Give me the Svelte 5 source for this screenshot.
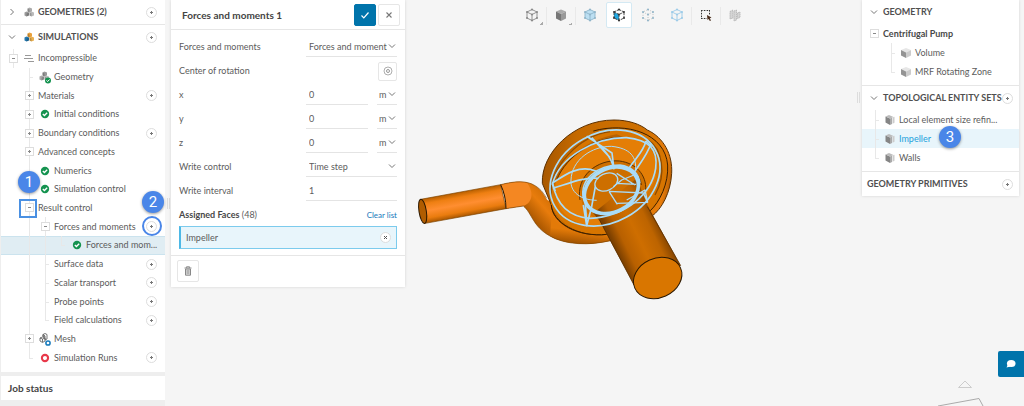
<script lang="ts">
  type Row = {
    cells: string[];
    label: string;
    add?: boolean;
    selected?: boolean;
    square?: boolean;
    badge?: number;
  };

  // one entry per 16px column: guides first, then the row icon
  const rows: Row[] = [
    { cells: ['minus', 'flow'], label: 'Incompressible' },
    { cells: ['', 'tee', 'geometry'], label: 'Geometry' },
    { cells: ['', 'plus'], label: 'Materials', add: true },
    { cells: ['', 'plus', 'check'], label: 'Initial conditions' },
    { cells: ['', 'plus'], label: 'Boundary conditions', add: true },
    { cells: ['', 'plus'], label: 'Advanced concepts' },
    { cells: ['', 'line', 'check'], label: 'Numerics' },
    { cells: ['', 'line', 'check'], label: 'Simulation control' },
    { cells: ['', 'minus'], label: 'Result control', square: true },
    { cells: ['', 'line', 'minus'], label: 'Forces and moments', add: true, badge: 2 },
    { cells: ['', 'line', 'line', 'elbow', 'check'], label: 'Forces and mom...', selected: true },
    { cells: ['', 'line', 'tee'], label: 'Surface data', add: true },
    { cells: ['', 'line', 'tee'], label: 'Scalar transport', add: true },
    { cells: ['', 'line', 'tee'], label: 'Probe points', add: true },
    { cells: ['', 'line', 'elbow'], label: 'Field calculations', add: true },
    { cells: ['', 'plus', 'mesh'], label: 'Mesh' },
    { cells: ['', 'elbow', 'runs'], label: 'Simulation Runs', add: true },
  ];

  const sets = ['Local element size refin...', 'Impeller', 'Walls'];
  const tools = ['wire', 'solid', 'volume', 'face', 'edge', 'vertex', 'box', 'hidden'];

  let axes = $state([
    { name: 'x', value: '0' },
    { name: 'y', value: '0' },
    { name: 'z', value: '0' },
  ]);
  let interval = $state('1');
  let activeTool = $state('face');
</script>

{#snippet chevron(open: boolean)}
  <svg class="chevron" aria-hidden="true" width="8" height="8" viewBox="0 0 8 8">
    <path d={open ? 'M1 2.5 4 5.5 7 2.5' : 'M2.5 1 5.5 4 2.5 7'} fill="none" stroke="#777" />
  </svg>
{/snippet}

{#snippet addButton(label: string)}
  <button class="add" aria-label="Add {label}">
    <svg aria-hidden="true" width="5" height="5" viewBox="0 0 5 5">
      <path d="M2.5 1v3M1 2.5h3" stroke="#777" />
    </svg>
  </button>
{/snippet}

{#snippet cubes(a: string, b: string, c: string)}
  <path d="M5.5 0.5 8 1.5V4.5L5.5 5.5 3.5 4.5V1.5z" fill={a} />
  <path d="M0.5 5.5 2.5 4.5 5 5.5V8.5L2.5 9.5 0.5 8.5z" fill={b} />
  <path d="M5.5 5.5 7.5 4.5 10 5.5V8.5L7.5 9.5 5.5 8.5z" fill={c} />
  <path d="M3.5 1.5 5.5 2.5V5.5L3.5 4.5zM2.5 6.5 5 5.5V8.5L2.5 9.5zM5.5 5.5 7.5 6.5V9.5L5.5 8.5z" fill="#0003" />
{/snippet}

{#snippet body()}
  <svg class="body-icon" aria-hidden="true" width="10" height="10" viewBox="0 0 10 10">
    <path d="M5 0 10 2 5 4.5 0 2z" fill="#e6e6e6" />
    <path d="M0 2 5 4.5V10L0 7.5z" fill="#949494" />
    <path d="M5 4.5 10 2V7.5L5 10z" fill="#ccc" />
  </svg>
{/snippet}

{#snippet faces()}
  <svg class="body-icon" aria-hidden="true" width="10" height="10" viewBox="0 0 10 10">
    <path d="M0.5 1.5 5 3.5V10L0.5 7.5z" fill="#858585" />
    <path d="M0.5 1.5 4 0 8.5 2 5 3.5z" fill="#bbb" />
    <path d="M5 3.5 7 2.7V9L5 10z" fill="#aaa" />
    <path d="M7.5 2.5 9.5 1.7V7.8L7.5 8.7z" fill="#ccc" />
  </svg>
{/snippet}

{#snippet cell(kind: string)}
  <span class="cell {kind}">
    {#if kind === 'plus' || kind === 'minus'}
      <button class="toggle" aria-label={kind === 'plus' ? 'Expand' : 'Collapse'}>
        <svg aria-hidden="true" width="5" height="5" viewBox="0 0 5 5">
          <path d={kind === 'plus' ? 'M2.5 1v3M1 2.5h3' : 'M1 2.5h3'} stroke="#888" />
        </svg>
      </button>
    {:else if kind === 'flow'}
      <svg aria-hidden="true" width="12" height="10" viewBox="0 0 12 10">
        <path d="M2 2.5h6M1 5.5h9M5 8.5h6" stroke="#999" />
      </svg>
    {:else if kind === 'geometry'}
      <svg aria-hidden="true" width="14" height="14" viewBox="0 0 14 14">
        <g transform="translate(1 1)">{@render cubes('#999', '#aaa', '#bbb')}</g>
        <circle cx="10" cy="10.5" r="3" fill="#159350" />
        <path d="M8.5 10.5 9.7 11.5 11.5 9.5" fill="none" stroke="#fff" />
      </svg>
    {:else if kind === 'check'}
      <svg aria-hidden="true" width="10" height="10" viewBox="0 0 10 10">
        <circle cx="5" cy="5" r="4.2" fill="#159350" />
        <path d="M2.8 5 4.4 6.5 7.2 3.7" fill="none" stroke="#fff" stroke-width="1.3" />
      </svg>
    {:else if kind === 'mesh'}
      <svg aria-hidden="true" width="14" height="14" viewBox="0 0 14 14">
        <path d="M5 2.5 7 1.5 9 2.5V7L7 8V4L5 4.5zM2 6 4.5 5 7 6V9L4.5 10.5 2 9zM2 6 4.5 7 7 6M4.5 7v3M5 4.5V2.5L7 4" fill="none" stroke="#555" stroke-width="0.8" />
        <circle cx="10" cy="11" r="2.1" fill="#fff" stroke="#1579bb" stroke-width="1.5" />
      </svg>
    {:else if kind === 'runs'}
      <svg aria-hidden="true" width="10" height="10" viewBox="0 0 10 10">
        <circle cx="5" cy="5" r="3.1" fill="#fff" stroke="#e8394a" stroke-width="2.1" />
      </svg>
    {/if}
  </span>
{/snippet}

{#snippet toolIcon(kind: string)}
  <svg aria-hidden="true" width="14" height="14" viewBox="0 0 14 14">
    {#if kind === 'box'}
      <path d="M2 2.5h9M2 10.5h6M2.5 2v9M10.5 2v5" fill="none" stroke="#333" stroke-dasharray="1.6 1.2" />
      <path d="M8 7 12.5 9.5 10.8 10.2 12 12.5 10.8 13 9.8 11 8.5 12z" fill="#4a2d1c" />
    {:else if kind === 'hidden'}
      <path d="M2 3.5 5 2V10L2 11zM6 3 8.5 2V12L6 13zM9.5 5 12 4V9.5L9.5 10.5z" fill="#d5d5d5" stroke="#b0b0b0" stroke-width="0.8" stroke-dasharray="1.5 0.6" />
    {:else if kind === 'solid'}
      <path d="M7 1.5 12 3.5 7 6 2 3.5z" fill="#aaa" />
      <path d="M2 3.5 7 6V13L2 10.5z" fill="#777" />
      <path d="M7 6 12 3.5V10.5L7 13z" fill="#999" />
    {:else}
      {@const color = kind === 'face' ? '#333' : kind === 'volume' || kind === 'vertex' ? '#9bcbe8' : kind === 'edge' ? '#bbb' : '#888'}
      {#if kind === 'volume'}
        <path d="M7 1.5 12 4V10L7 12.5 2 10V4z" fill="#bcdff2" />
      {:else if kind === 'face'}
        <path d="M2 4 7 6.5V12.5L2 10z" fill="#22a7e0" />
      {/if}
      <path
        d="M7 1.5 12 4V10L7 12.5 2 10V4zM2 4 7 6.5 12 4M7 6.5V12.5"
        fill="none"
        stroke={kind === 'volume' ? '#8db4ca' : color}
        stroke-width="0.9"
        stroke-dasharray={kind === 'edge' ? '1 1.5' : kind === 'face' ? '2.4 0.8' : 'none'}
      />
      {#each [[7, 1.5], [12, 4], [12, 10], [7, 12.5], [2, 10], [2, 4], [7, 6.5]] as [x, y]}
        <circle cx={x} cy={y} r="1" fill={kind === 'edge' || kind === 'volume' ? '#8fb4c8' : color} />
      {/each}
    {/if}
  </svg>
{/snippet}

<div class="workbench">
  <aside class="sidebar">
    <nav class="tree-card" aria-label="Project">
      <div class="section">
        {@render chevron(false)}
        <svg aria-hidden="true" width="10" height="10" viewBox="0 0 10 10">
          {@render cubes('#aaa', '#999', '#bbb')}
        </svg>
        <h2>GEOMETRIES (2)</h2>
        {@render addButton('geometry')}
      </div>
      <div class="section open">
        {@render chevron(true)}
        <svg aria-hidden="true" width="10" height="10" viewBox="0 0 10 10">
          {@render cubes('#e9a13b', '#2377ae', '#e9b152')}
        </svg>
        <h2>SIMULATIONS</h2>
        {@render addButton('simulation')}
      </div>
      <ul class="tree">
        {#each rows as row}
          <li class:selected={row.selected}>
            {#each row.cells as kind}
              {@render cell(kind)}
            {/each}
            <span class="label">{row.label}</span>
            {#if row.add}
              {@render addButton(row.label)}
            {/if}
            {#if row.square}
              <span class="mark-square"></span>
              <span class="callout one">1</span>
            {/if}
            {#if row.badge}
              <span class="mark-ring"></span>
              <span class="callout two">{row.badge}</span>
            {/if}
          </li>
        {/each}
      </ul>
    </nav>
    <h2 class="job-status">Job status</h2>
  </aside>

  <div class="handle"></div>

  <form class="settings" onsubmit={(e) => e.preventDefault()}>
    <header>
      <h1>Forces and moments 1</h1>
      <button class="square-button primary" aria-label="Save">
        <svg aria-hidden="true" width="10" height="10" viewBox="0 0 10 10">
          <path d="M1.5 5.5 3.8 7.8 8.5 2.5" fill="none" stroke="#fff" stroke-width="1.2" />
        </svg>
      </button>
      <button class="square-button" type="button" aria-label="Close">
        <svg aria-hidden="true" width="8" height="8" viewBox="0 0 8 8">
          <path d="M1.5 1.5 6.5 6.5M6.5 1.5 1.5 6.5" stroke="#777" stroke-width="1.1" />
        </svg>
      </button>
    </header>

    <div class="fields">
      <div class="field">
        <label for="kind">Forces and moments</label>
        <span class="select">
          <select id="kind"><option>Forces and moments</option></select>
          {@render chevron(true)}
        </span>
      </div>
      <div class="field">
        <span class="name">Center of rotation</span>
        <button class="pick" type="button" aria-label="Pick center of rotation">
          <svg aria-hidden="true" width="10" height="10" viewBox="0 0 10 10">
            <circle cx="5" cy="5" r="4" fill="none" stroke="#999" stroke-width="0.8" />
            <circle cx="5" cy="5" r="1.5" fill="none" stroke="#999" />
          </svg>
        </button>
      </div>
      {#each axes as axis}
        <div class="field">
          <label for="axis-{axis.name}">{axis.name}</label>
          <span class="pair">
            <input id="axis-{axis.name}" bind:value={axis.value} />
            <span class="select unit">
              <select aria-label="Unit of {axis.name}"><option>m</option></select>
              {@render chevron(true)}
            </span>
          </span>
        </div>
      {/each}
      <div class="field">
        <label for="write-control">Write control</label>
        <span class="select">
          <select id="write-control"><option>Time step</option></select>
          {@render chevron(true)}
        </span>
      </div>
      <div class="field">
        <label for="interval">Write interval</label>
        <input id="interval" bind:value={interval} />
      </div>
      <div class="assigned-head">
        <span><strong>Assigned Faces</strong> (48)</span>
        <a href="#clear">Clear list</a>
      </div>
      <div class="assigned">
        <span>Impeller</span>
        <button class="add" type="button" aria-label="Remove Impeller">
          <svg aria-hidden="true" width="5" height="5" viewBox="0 0 5 5">
            <path d="M1 1 4 4M4 1 1 4" stroke="#555" />
          </svg>
        </button>
      </div>
    </div>

    <footer>
      <button class="square-button" type="button" aria-label="Delete">
        <svg aria-hidden="true" width="10" height="10" viewBox="0 0 10 10">
          <path d="M1.5 2h7M3.5 1.8V0.8h3v1" fill="none" stroke="#888" />
          <path d="M2.5 3h5v6.2h-5z" fill="#ddd" stroke="#888" />
          <path d="M4.2 4v4M5.8 4v4" stroke="#888" stroke-width="0.7" />
        </svg>
      </button>
    </footer>
  </form>

  <main class="stage">
    <div class="toolbar" role="toolbar" aria-label="View">
      {#each tools as tool}
        <button
          class="tool {tool}"
          class:active={activeTool === tool}
          aria-label="{tool} mode"
          onclick={() => (activeTool = tool)}
        >
          {@render toolIcon(tool)}
        </button>
      {/each}
    </div>
    <svg class="model" viewBox="-15 -219 1371 1122" role="img" aria-label="Centrifugal pump model">
      <defs>
        <linearGradient id="inlet" gradientUnits="userSpaceOnUse" x1="150" y1="262" x2="163" y2="334">
          <stop offset="0" stop-color="#b96000" />
          <stop offset="0.2" stop-color="#ee7f12" />
          <stop offset="0.5" stop-color="#ff8e31" />
          <stop offset="0.8" stop-color="#ea7c0e" />
          <stop offset="1" stop-color="#a85600" />
        </linearGradient>
        <linearGradient id="bend" gradientUnits="userSpaceOnUse" x1="440" y1="270" x2="360" y2="340">
          <stop offset="0" stop-color="#c56700" />
          <stop offset="0.5" stop-color="#e87c0c" />
          <stop offset="1" stop-color="#a65500" />
        </linearGradient>
        <linearGradient id="volute" gradientUnits="userSpaceOnUse" x1="520" y1="380" x2="515" y2="420">
          <stop offset="0" stop-color="#e37a08" />
          <stop offset="1" stop-color="#9c5000" />
        </linearGradient>
        <linearGradient id="casing" gradientUnits="userSpaceOnUse" x1="410" y1="170" x2="790" y2="230">
          <stop offset="0" stop-color="#a95900" />
          <stop offset="0.2" stop-color="#c56a00" />
          <stop offset="0.7" stop-color="#cf7000" />
          <stop offset="0.93" stop-color="#e87d0c" />
          <stop offset="1" stop-color="#a45400" />
        </linearGradient>
        <linearGradient id="outlet" gradientUnits="userSpaceOnUse" x1="620" y1="435" x2="755" y2="370">
          <stop offset="0" stop-color="#7c4000" />
          <stop offset="0.2" stop-color="#b86000" />
          <stop offset="0.5" stop-color="#ce6e00" />
          <stop offset="0.8" stop-color="#bd6400" />
          <stop offset="1" stop-color="#874600" />
        </linearGradient>
      </defs>

      <path d="M32 283 272 239 288 311 46 355z" fill="url(#inlet)" stroke="#7c4200" stroke-width="2" />
      <ellipse cx="38" cy="319" rx="11" ry="37" transform="rotate(-9 38 319)" fill="#b05c00" stroke="#2b1800" stroke-width="3" />
      <path d="M272 239C315 228 350 226 375 242 395 254 402 270 412 285L620 380 600 407C540 422 465 420 420 393 368 365 366 324 340 303L288 311C288 285 282 260 272 239z" fill="url(#bend)" />
      <path d="M272 239C300 232 330 228 350 232 375 265 365 295 340 303L288 311C288 285 282 260 272 239z" fill="#f48722" />
      <path d="M425 330C450 375 520 400 600 382L605 407C540 422 465 420 420 393z" fill="url(#volute)" />
      <path d="M272 239C315 228 350 226 375 242 395 254 402 268 410 280M288 311 340 303C366 324 368 365 420 393 465 420 540 422 600 407" fill="none" stroke="#7c4200" stroke-width="2" />
      <path d="M272 239C282 260 288 285 288 311" fill="none" stroke="#2b1800" stroke-width="3" />

      <path d="M397 235C393 145 490 45 612 45 655 45 690 57 712 75 762 98 788 150 785 205 782 262 756 312 725 334L595 388C500 398 428 355 424 300z" fill="url(#casing)" stroke="#5c3000" stroke-width="3" />
      <path d="M424 300C405 200 490 85 630 72 715 72 770 120 772 190 773 245 750 290 722 318L595 388C505 397 440 350 424 300z" fill="#d77500" />
      <path d="M424 300C426 352 505 398 590 388M550 78C650 50 765 85 773 180 776 235 750 290 720 318" fill="none" stroke="#3a1f00" stroke-width="3" />
      <path d="M424 280C415 185 510 92 600 80" fill="none" stroke="#8f4c00" stroke-width="4" />
      <path d="M438 232C470 145 560 98 650 98 720 105 745 150 738 215 700 310 620 350 555 362 480 362 425 310 438 232z" fill="#e47e06" />
      <path d="M424 262C435 180 520 105 620 88L645 98C560 98 470 150 436 232z" fill="#b96200" />
      <path d="M440 225C470 150 560 90 645 98" fill="none" stroke="#5b3100" stroke-width="3" />
      <path d="M715 105C755 130 772 205 735 270" fill="none" stroke="#8f4c00" stroke-width="4" />

      <path d="M513 270C500 210 565 160 628 168 678 174 710 210 707 255L690 300 567 345C530 330 515 310 513 270z" fill="#cd6f00" />
      <path d="M510 285C497 215 560 162 628 168 678 174 710 210 707 255M524 290C515 230 570 183 625 182 665 184 690 205 694 240" fill="none" stroke="#5b3100" stroke-width="3" />
      <path d="M567 345 550 325 680 220 712 300 812 482 672 540z" fill="url(#outlet)" />
      <path d="M569 345 672 540M712 305 812 482" stroke="#5c3000" stroke-width="2.5" />
      <ellipse cx="743" cy="519" rx="75" ry="59" transform="rotate(-24 743 519)" fill="#d97600" stroke="#2b1800" stroke-width="3" />

      <g class="wires">
        <ellipse cx="585" cy="219" rx="173" ry="134" transform="rotate(-29 585 219)" stroke-width="5" />
        <path d="M428 235C450 155 555 97 650 98 715 105 745 130 737 190 725 265 650 335 540 340 475 335 440 300 428 235z" stroke-width="5" />
        <path d="M483 225C485 165 545 123 605 124 660 130 682 155 676 200M483 225C480 260 510 285 560 286" />
        <path d="M530 94C565 112 604 150 612 193M530 94 606 144 612 193M545 98 600 158" stroke-width="5" />
        <path d="M708 108C700 140 678 158 658 188M723 115C712 150 690 175 675 198M708 108 725 125" stroke-width="5" />
        <path d="M426 235C470 205 510 180 555 197L568 207M428 250C480 234 525 215 565 220M426 235 436 258" stroke-width="5" />
        <path d="M525 270 530 362 545 305 556 245M530 362 520 300" stroke-width="5" />
        <path d="M597 259 700 264 713 292 622 295M597 259 622 298M650 285 705 255 713 292" stroke-width="4" />
        <path d="M620 205 675 240M620 235 678 238M610 245 635 225 672 210" stroke-width="4" />
        <ellipse cx="589" cy="231" rx="36" ry="25" transform="rotate(-25 589 231)" stroke-width="4" />
        <ellipse cx="604" cy="256" rx="85" ry="65" transform="rotate(-28 604 256)" stroke-width="11" />
        <path d="M520 280C508 225 560 180 630 180 665 185 688 205 690 235" stroke-width="4" />
      </g>
    </svg>
  </main>

  <div class="right">
    <aside class="scene">
      <section>
        <h2>{@render chevron(true)}GEOMETRY</h2>
        <p class="part">{@render cell('minus')}<strong>Centrifugal Pump</strong></p>
        <ul class="bodies">
          <li>{@render cell('tee')}{@render body()}<span class="label">Volume</span></li>
          <li>{@render cell('elbow')}{@render body()}<span class="label">MRF Rotating Zone</span></li>
        </ul>
      </section>
      <section>
        <h2>{@render chevron(true)}TOPOLOGICAL ENTITY SETS {@render addButton('entity set')}</h2>
        <ul>
          {#each sets as set, i}
            <li class:picked={set === 'Impeller'}>
              {@render cell(i === sets.length - 1 ? 'elbow' : 'tee')}
              {@render faces()}
              <span class="label">{set}</span>
              {#if set === 'Impeller'}
                <span class="callout three">3</span>
              {/if}
            </li>
          {/each}
        </ul>
      </section>
      <section>
        <h2 class="plain">GEOMETRY PRIMITIVES {@render addButton('primitive')}</h2>
      </section>
    </aside>
    <svg class="gizmo" aria-hidden="true" width="60" height="28" viewBox="0 0 60 28">
      <path d="M28 3 34.5 9.5H21.5z" fill="none" stroke="#ccc" />
      <path d="M1 28 42 20.5 46 28" fill="none" stroke="#aaa" />
    </svg>
  </div>

  <button class="chat" aria-label="Open chat">
    <svg aria-hidden="true" width="10" height="10" viewBox="0 0 10 10">
      <ellipse cx="5.2" cy="4.5" rx="4.3" ry="3.5" fill="#fff" />
      <path d="M2 5.5 0.5 8.5 4.5 7.5z" fill="#fff" />
    </svg>
  </button>
</div>

<style>
  :global(body) {
    background: #f5f5f5;
  }

  .workbench {
    display: flex;
    align-items: flex-start;
    min-height: 100vh;
    color: #5c5c5c;
    font-family: Lato, 'Open Sans', sans-serif;
    font-size: 9px;
    line-height: 12px;
  }

  h1,
  h2,
  p,
  ul {
    margin: 0;
    padding: 0;
    list-style: none;
  }

  h2 {
    color: #505050;
    font-size: 9px;
    font-weight: 700;
  }

  svg {
    display: block;
    flex-shrink: 0;
  }

  button {
    display: flex;
    flex-shrink: 0;
    justify-content: center;
    align-items: center;
    box-sizing: border-box;
    padding: 0;
    border: 1px solid #e6e6e6;
    background: #fff;
    cursor: pointer;
  }

  .add {
    width: 11px;
    height: 11px;
    margin-left: auto;
    border-color: #ddd;
    border-radius: 50%;
  }

  .label {
    white-space: nowrap;
  }

  .sidebar {
    display: flex;
    flex-direction: column;
    gap: 4px;
    box-sizing: border-box;
    width: 165px;
    height: 100vh;
    min-height: 400px;
    padding-bottom: 6px;
    border-left: 1px solid #eee;
    background: #eee;
  }

  .tree-card {
    display: flex;
    flex: 1;
    flex-direction: column;
    padding-bottom: 5px;
    background: #fff;
  }

  .section {
    display: flex;
    align-items: center;
    gap: 4px;
    height: 24px;
    padding: 0 8px 0 7px;
    border-bottom: 1px solid #e6e6e6;
  }

  .section .chevron {
    margin-right: 4px;
  }

  .section.open {
    border-bottom: none;
  }

  .tree {
    display: grid;
    flex: 1;
    grid-auto-rows: 1fr;
  }

  .tree li {
    position: relative;
    display: flex;
    align-items: center;
    min-width: 0;
    padding: 0 8px 0 4px;
  }

  .tree li.selected {
    background: #e0edf3;
    box-shadow: inset 0 1px #cbe3ee, inset 0 -1px #cbe3ee;
  }

  .cell {
    position: relative;
    display: flex;
    flex-shrink: 0;
    justify-content: center;
    align-self: stretch;
    align-items: center;
    width: 16px;
  }

  .cell + .label {
    margin-left: 1px;
  }

  .line::before,
  .tee::before,
  .elbow::before,
  .tree .plus::before,
  .tree .minus::before {
    position: absolute;
    top: 0;
    bottom: 0;
    left: 8px;
    border-left: 1px solid #e8e8e8;
    content: '';
  }

  .elbow::before {
    bottom: 50%;
  }

  .tee::after,
  .elbow::after {
    position: absolute;
    top: 50%;
    left: 8px;
    width: 4px;
    border-top: 1px solid #e8e8e8;
    content: '';
  }

  .toggle {
    position: relative;
    width: 9px;
    height: 9px;
    border-color: #ddd;
  }

  .callout {
    position: absolute;
    z-index: 2;
    width: 22px;
    height: 22px;
    border-radius: 50%;
    background: #4a86e8;
    box-shadow: 0 1px 3px #0006;
    color: #fff;
    font-family: Roboto, sans-serif;
    font-size: 15px;
    line-height: 22px;
    text-align: center;
  }

  .one {
    bottom: 24px;
    left: 17px;
  }

  .two {
    right: 1px;
    bottom: 23px;
  }

  .three {
    top: -3px;
    left: 77px;
  }

  .mark-square,
  .mark-ring {
    position: absolute;
    z-index: 1;
    box-sizing: border-box;
    border: 2px solid #4a90e2;
    pointer-events: none;
  }

  .mark-square {
    top: 0;
    left: 18px;
    width: 18px;
    height: 19px;
  }

  .mark-ring {
    top: -1px;
    right: 3px;
    width: 20px;
    height: 20px;
    border-color: #4a86e8;
    border-radius: 50%;
  }

  .job-status {
    padding: 6px 7px;
    background: #fff;
    color: #444;
    font-size: 10px;
  }

  .handle {
    flex-shrink: 0;
    align-self: center;
    box-sizing: border-box;
    width: 3px;
    height: 11px;
    margin: 0 1px 0 2px;
    border: solid #ddd;
    border-width: 0 1px;
  }

  .settings {
    flex-shrink: 0;
    width: 234px;
    background: #fff;
    box-shadow: 0 0 3px #0002;
  }

  .settings header {
    display: flex;
    align-items: center;
    gap: 2px;
    height: 29px;
    padding: 0 5px 0 11px;
    border-bottom: 1px solid #e6e6e6;
  }

  h1 {
    flex: 1;
    color: #444;
    font-size: 10px;
    font-weight: 700;
  }

  .square-button {
    width: 22px;
    height: 22px;
    border-radius: 2px;
  }

  .primary {
    border-color: #0074ab;
    background: #0074ab;
  }

  .fields {
    padding: 5px 8px 6px;
  }

  .field {
    display: grid;
    grid-template-columns: 127px 1fr;
    align-items: center;
    height: 24px;
  }

  .select,
  .pair {
    position: relative;
    display: flex;
    min-width: 0;
  }

  .pair {
    gap: 9px;
  }

  .unit {
    flex-shrink: 0;
    width: 20px;
  }

  .select .chevron {
    position: absolute;
    top: 5px;
    right: 1px;
  }

  input,
  select {
    box-sizing: border-box;
    width: 100%;
    min-width: 0;
    height: 20px;
    padding: 0 3px;
    border: none;
    border-bottom: 1px solid #e4e4e4;
    border-radius: 0;
    background: transparent;
    color: inherit;
    font: inherit;
    appearance: none;
  }

  select {
    padding-right: 10px;
    text-overflow: clip;
  }

  .unit select {
    padding-left: 2px;
  }

  .pick {
    justify-self: end;
    width: 19px;
    height: 19px;
    border-radius: 2px;
  }

  .assigned-head {
    display: flex;
    justify-content: space-between;
    align-items: center;
    height: 23px;
  }

  strong {
    color: #484848;
  }

  .assigned-head a {
    color: #1579bb;
    font-size: 8px;
    text-decoration: none;
  }

  .assigned {
    display: flex;
    align-items: center;
    box-sizing: border-box;
    height: 23px;
    padding: 0 5px;
    border: 1px solid #7ccbed;
    border-left: 2px solid #4db8e6;
    background: #e8f5fb;
  }

  .settings footer {
    padding: 4px 6px 5px;
    border-top: 1px solid #e6e6e6;
  }

  .stage {
    display: flex;
    flex: 1;
    flex-direction: column;
    min-width: 0;
    height: 100vh;
  }

  .toolbar {
    display: flex;
    justify-content: center;
    gap: 3px;
    height: 30px;
    padding-top: 2px;
  }

  .tool {
    position: relative;
    width: 26px;
    height: 26px;
    border-color: transparent;
    border-radius: 2px;
    background: transparent;
  }

  .tool.active {
    border-color: #d4e9f3;
    background: #fff;
  }

  .wire::before,
  .solid::before,
  .vertex::before,
  .box::before {
    position: absolute;
    top: 4px;
    right: -3px;
    height: 18px;
    border-left: 1px solid #e9e9e9;
    content: '';
  }

  .wire::after,
  .solid::after {
    position: absolute;
    right: 1px;
    bottom: 2px;
    width: 3px;
    height: 3px;
    background: linear-gradient(135deg, transparent 50%, #aaa 50%);
    content: '';
  }

  .model {
    flex: 1;
    width: 100%;
    min-height: 0;
  }

  .wires {
    fill: none;
    stroke: #a9dcf8;
    stroke-linejoin: round;
    stroke-width: 3;
  }

  .right {
    display: flex;
    flex-direction: column;
    justify-content: space-between;
    width: 157px;
    height: 100vh;
    margin-right: 5px;
  }

  .scene {
    position: relative;
    background: #fff;
    box-shadow: 0 0 3px #0002;
  }

  .scene::before {
    position: absolute;
    top: 50%;
    left: -5px;
    width: 1px;
    height: 11px;
    margin-top: -6px;
    border: solid #ddd;
    border-width: 0 1px;
    content: '';
  }

  .scene section + section {
    border-top: 1px solid #e6e6e6;
  }

  .scene h2 {
    display: flex;
    align-items: center;
    height: 24px;
    padding: 0 6px 0 8px;
    white-space: nowrap;
  }

  .scene h2 .chevron {
    margin-right: 5px;
  }

  .scene h2.plain {
    padding-left: 5px;
  }

  .part {
    display: flex;
    align-items: center;
    gap: 1px;
    height: 19px;
    padding-left: 4px;
  }

  .scene li {
    position: relative;
    display: flex;
    align-items: center;
    height: 19px;
    padding: 0 24px 0 5px;
  }

  .scene ul {
    padding-bottom: 4px;
  }

  .scene .bodies li {
    padding-left: 21px;
  }

  .body-icon {
    margin: 0 4px 0 2px;
  }

  .picked {
    background: #e8f5fb;
    color: #1ba1dc;
  }

  .gizmo {
    margin-left: 75px;
  }

  .chat {
    position: fixed;
    right: 0;
    bottom: 29px;
    width: 26px;
    height: 26px;
    border: none;
    border-radius: 2px 0 0 2px;
    background: #0074ab;
  }
</style>
